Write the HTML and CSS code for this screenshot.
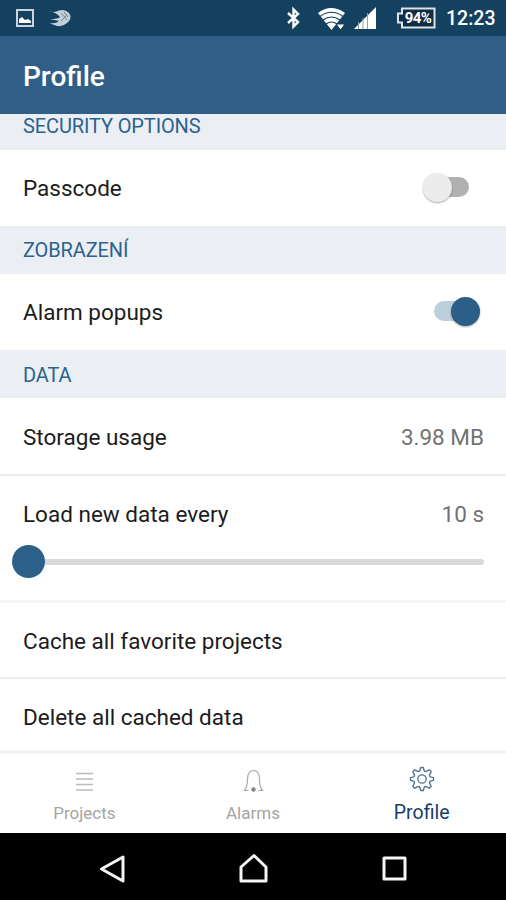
FILE: index.html
```html
<!DOCTYPE html>
<html lang="en">
<head>
<meta charset="utf-8">
<title>Profile</title>
<link rel="stylesheet" href="styles.css">
</head>
<body>
<div class="screen">
  <header class="status">
    <svg class="picture" width="18" height="18" viewBox="0 0 18 18"><path d="M1 1h16v16H1z" fill="none" stroke="#c9d4de" stroke-width="2"/><path d="M3 14v-4l3-2 3 3 3-1 3 2v2z" fill="#fff"/></svg>
    <svg class="swift" width="23" height="19" viewBox="0 0 23 19"><path d="M-1 2Q6 4 10 1.500Q16 0 20 4Q23 8 20 12Q15 18 8 17L0 14Q7 15 10 12L1 10Q9 10 11 8Q7 3 -1 2z" fill="#c3cfda"/><path d="M12 4l6 7M15 3l4 5M12 12l6-6" fill="none" stroke="#5f7d93" stroke-width=".9"/></svg>
    <span class="spacer"></span>
    <svg class="bluetooth" width="14" height="20" viewBox="0 0 14 20"><path d="M2 5l10 9-4.500 4.500V1.500L12 6 2 15" fill="none" stroke="#fff" stroke-width="2.400"/></svg>
    <svg class="wifi" width="28" height="24" viewBox="0 0 28 24"><path d="M0 6Q13-4 27 6L13.500 23z" fill="#fff"/><path d="M2 9.500Q13.500 1 25 9.500M5 13Q13.500 7 22 13M8 17Q13.500 13 19 17" fill="none" stroke="#14415f" stroke-width="1.100"/><path d="M18 17h9l-4.500 6z" fill="#fff" stroke="#14415f" stroke-width="1"/></svg>
    <svg class="signal" width="22" height="22" viewBox="0 0 22 22"><path d="M0 22L22 0v22z" fill="#fff"/><path d="M4.500 15v7M9 11v11M13.500 6v16" stroke="#8ba1b2" stroke-width="1"/></svg>
    <span class="battery"><svg width="40" height="22" viewBox="0 0 40 22"><path d="M6 1.500h32.500v19H6v-5H2v-9h4z" fill="#102d43" stroke="#dce3e9" stroke-width="2"/></svg><span>94%</span></span>
    <span class="clock">12:23</span>
  </header>
  <h1 class="appbar">Profile</h1>
  <main class="list">
    <h2 class="section clipped">SECURITY OPTIONS</h2>
    <div class="row raised"><span class="label">Passcode</span><span class="switch"></span></div>
    <h2 class="section">ZOBRAZENÍ</h2>
    <div class="row raised"><span class="label">Alarm popups</span><span class="switch on"></span></div>
    <h2 class="section data">DATA</h2>
    <div class="row"><span class="label">Storage usage</span><span class="value">3.98 MB</span></div>
    <div class="slider-row">
      <div class="slider-head"><span class="label">Load new data every</span><span class="value">10 s</span></div>
      <div class="slider"></div>
    </div>
    <div class="row action">Cache all favorite projects</div>
    <div class="row action last">Delete all cached data</div>
  </main>
  <nav class="tabs">
    <div class="tab"><svg width="26" height="26" viewBox="0 0 26 26"><path d="M5 5.500h17M5 11h17M5 16.500h17M5 22h17" stroke="#bbb" stroke-width="1.500"/></svg><span>Projects</span></div>
    <div class="tab"><svg width="26" height="26" viewBox="0 0 26 26"><path d="M3.500 22.500h5M18.500 22.500h5M4.500 22.500Q7.500 19 7.500 11C7.500 5 10 2.500 13.500 2.500S19.500 5 19.500 11Q19.500 19 22.500 22.500" fill="none" stroke="#a9a9a9" stroke-width="1.200"/><circle cx="13.500" cy="21.500" r="2.200" fill="#858585"/></svg><span>Alarms</span></div>
    <div class="tab active"><svg width="26" height="26" viewBox="0 0 26 26"><path d="M11.700 1.500h2.600l.9 3.200q.8 1.300 2.200.6l2.900-1.500 1.900 1.900-1.500 2.900q-.7 1.400.6 2.200l3.200.9v2.600l-3.200.9q-1.300.8-.6 2.200l1.500 2.900-1.900 1.900-2.900-1.500q-1.400-.7-2.200.6l-.9 3.200h-2.600l-.9-3.200q-.8-1.300-2.200-.6l-2.900 1.500-1.900-1.900 1.500-2.900q.7-1.400-.6-2.200L1.500 14.300v-2.600l3.200-.9q1.300-.8.600-2.200L3.800 5.700l1.900-1.900 2.900 1.500q1.400.7 2.200-.6z" fill="none" stroke="#557590" stroke-width="1.400" stroke-linejoin="round"/><circle cx="13" cy="13" r="4.200" fill="none" stroke="#557590" stroke-width="1.300"/></svg><span>Profile</span></div>
  </nav>
  <footer class="system">
    <svg width="28" height="30" viewBox="0 0 28 30"><path d="M25 4v24L3.500 16z"/></svg>
    <svg width="28" height="30" viewBox="0 0 28 30"><path d="M15 2.500L27 14v14H2V14z"/></svg>
    <svg width="28" height="30" viewBox="0 0 28 30"><path d="M4 5h21v21H4z"/></svg>
  </footer>
</div>
</body>
</html>
```

FILE: styles.css
```css
* { box-sizing: border-box; }
body { margin: 0; font-family: Roboto, "Liberation Sans", sans-serif; background: #fff; }
h1, h2 { margin: 0; font-weight: 400; }
svg { display: block; flex: none; overflow: visible; }
.screen { width: 506px; height: 900px; display: flex; flex-direction: column; overflow: hidden; }

.status { height: 36px; flex: none; display: flex; align-items: center; background: #14415f; padding: 0 11px 0 16px; }
.swift { margin-left: 15px; }
.spacer { flex: 1; }
.bluetooth { margin-right: 18px; }
.wifi { margin: 2px 8px 0 0; }
.signal { margin: 0 20px 0 0; }
.battery { display: grid; place-items: center; margin-right: 10px; color: #fff; font-size: 15px; font-weight: 700; }
.battery > * { grid-area: 1 / 1; }
.battery span { margin-left: 4px; letter-spacing: -.6px; line-height: 20px; }
.clock { width: 49px; color: #fff; font-size: 19.500px; font-weight: 500; line-height: 36px; padding-top: 2px; white-space: nowrap; }

.appbar { height: 78px; flex: none; padding-left: 23px; background: #305e87; color: #fff; font-size: 28px; font-weight: 500; line-height: 81px; }

.list { height: 640px; flex: none; overflow: hidden; display: flex; flex-direction: column; border-bottom: 4px solid #f5f5f5; }
.section { height: 48px; flex: none; padding-left: 23px; background: #ebeff3; color: #2b628f; font-size: 20px; letter-spacing: -.12px; line-height: 49px; }
.section.data { line-height: 51px; }
.clipped { margin-top: -12px; }
.row { height: 76px; flex: none; padding: 1px 22px 0 23px; display: flex; align-items: center; justify-content: space-between; font-size: 22.500px; color: #1c1c1c; }
.raised .label { margin-top: -2px; }
.value { color: #727272; }
.switch { width: 35px; height: 20px; border-radius: 10px; background: #b1b1b1; margin: -3px 15px 0 0; display: flex; align-items: center; }
.switch::before { content: ""; flex: none; width: 29px; height: 29px; margin-left: -11px; border-radius: 50%; background: #ececec; box-shadow: 0 1px 2px #0005; }
.switch.on { width: 46px; margin-right: 4px; background: #bccfdb; justify-content: flex-end; }
.switch.on::before { margin: 0; background: #2c5f88; }
.slider-row { height: 129px; flex: none; border-top: 2px solid #ededed; border-bottom: 3px solid #f6f6f6; padding: 24px 22px 0 12px; font-size: 22.500px; color: #1c1c1c; }
.slider-head { display: flex; justify-content: space-between; padding-left: 11px; line-height: 28px; }
.slider { height: 33px; margin-top: 17px; display: flex; align-items: center; }
.slider::before { content: ""; width: 33px; height: 33px; border-radius: 50%; background: #2d6089; }
.slider::after { content: ""; flex: 1; height: 6px; border-radius: 0 3px 3px 0; background: #d9d9d9; }
.action { border-bottom: 2px solid #ededed; }
.last { border-bottom: 0; padding-top: 0; height: 75px; }

.tabs { height: 79px; flex: none; display: grid; grid-template-columns: repeat(3, 1fr); background: #fff; }
.tab { display: flex; flex-direction: column; align-items: center; padding-top: 14px; font-size: 17px; line-height: 20px; color: #a4a4a4; }
.tab span { margin-top: 9px; }
.tab.active { padding-top: 12px; font-size: 19.500px; color: #173f66; }
.tab.active span { margin-top: 11px; }
.system { height: 67px; flex: none; background: #000; display: flex; justify-content: center; align-items: center; gap: 113px; padding-top: 3px; }
.system path { fill: none; stroke: #f5f5f5; stroke-width: 3; stroke-linejoin: round; }
```
